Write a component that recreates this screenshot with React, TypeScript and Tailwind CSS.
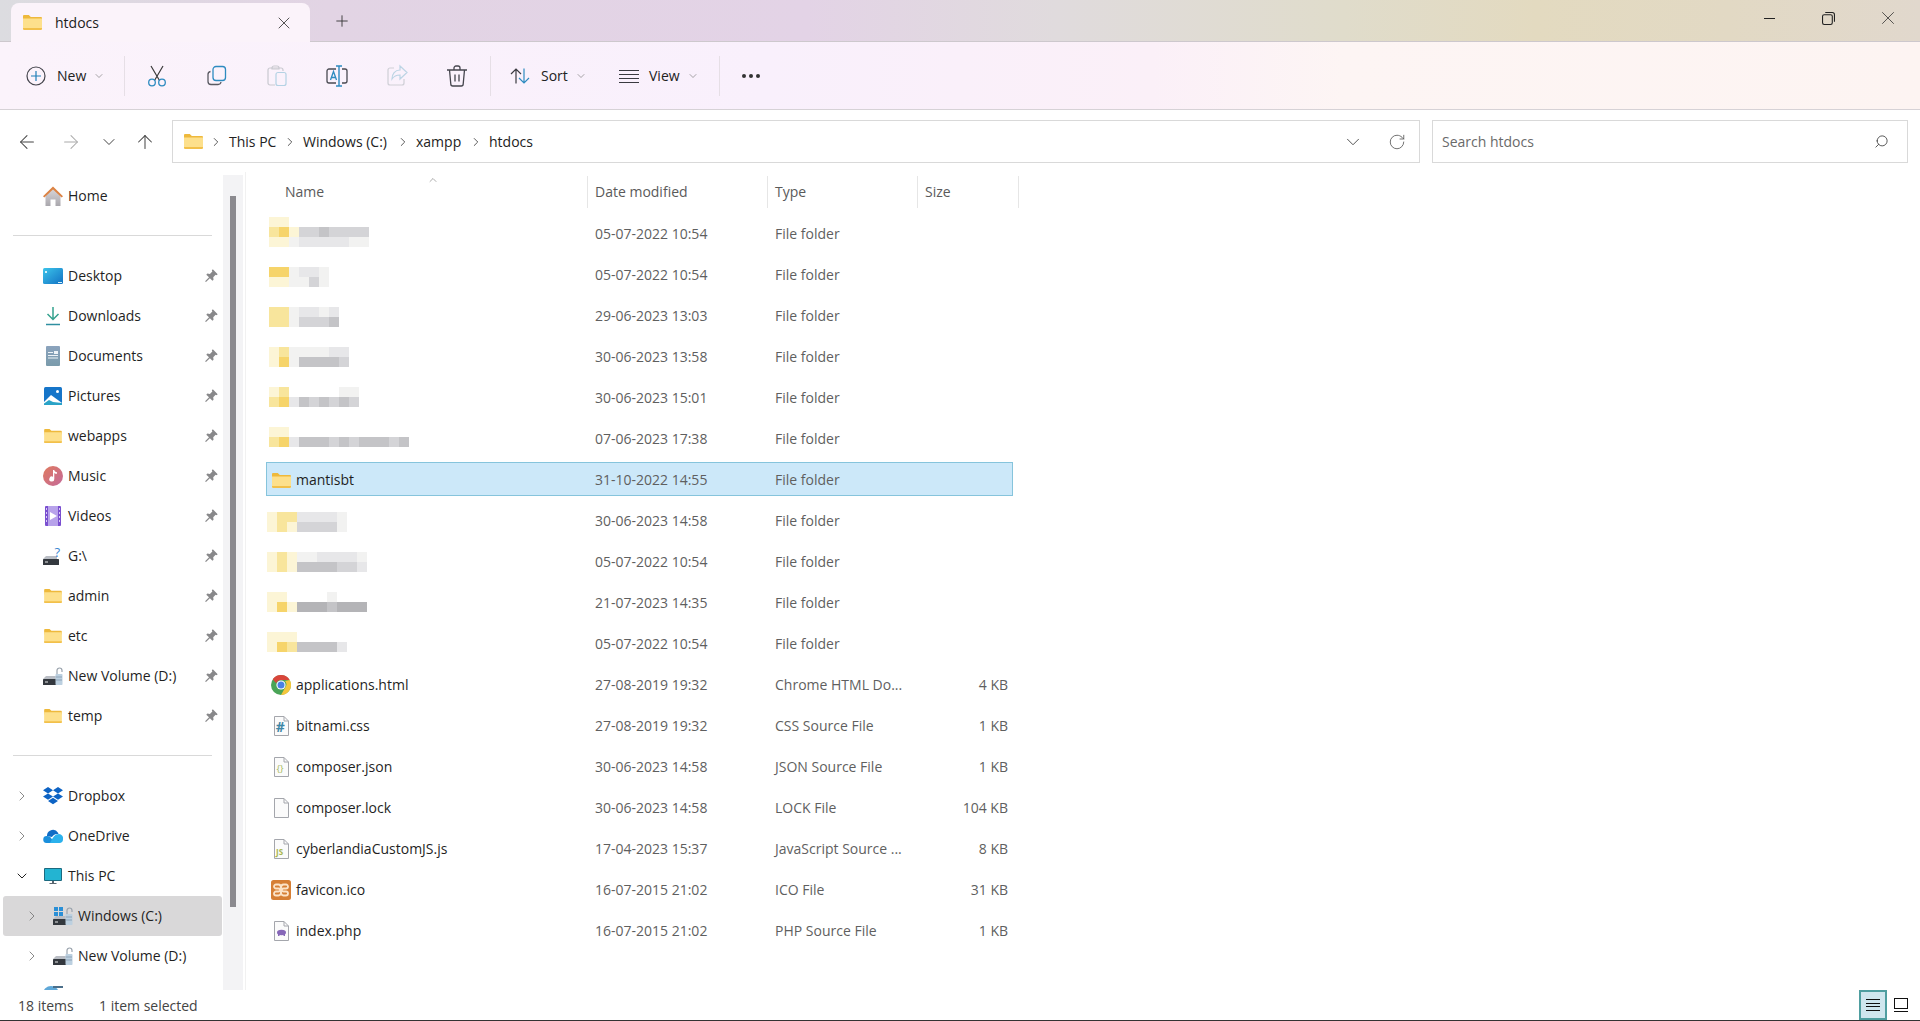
import { ArrowLeft, ArrowRight, ArrowUp, ChevronDown, ChevronRight, ChevronUp, Plus, RotateCw, Search, X } from "lucide-react";
import type { ReactNode } from "react";

function FolderIcon({ className = "w-[19px] h-[15px]" }: { className?: string }) {
    return (
        <svg viewBox="0 0 19 15" className={className}>
            <path d="M0 1.2C0 .5.5 0 1.2 0h4.6l2 2h10c.7 0 1.2.5 1.2 1.2V6H0z" fill="#eeb93c" />
            <path d="M0 3.4h19v10.4c0 .7-.5 1.2-1.2 1.2H1.2C.5 15 0 14.5 0 13.8z" fill="#fde08c" />
            <path d="M0 13h19v.8c0 .7-.5 1.2-1.2 1.2H1.2C.5 15 0 14.5 0 13.8z" fill="#f2c04a" />
        </svg>
    );
}

function PinIcon() {
    return (
        <svg viewBox="0 0 12 12" className="mb-[2px] w-[13px] h-[13px]" fill="#88888a">
            <path d="M7.2.3l4.5 4.5-1 .9-.9-.4-2.2 2.2.3 2.4-1 1-2.4-2.4-3.6 3.5-.8-.7 3.6-3.6L1.2 5.2l1-1 2.3.3 2.3-2.2-.5-1z" />
        </svg>
    );
}

function HomeIcon() {
    return (
        <svg viewBox="0 0 20 20" className="w-[20px] h-[20px]">
            <defs>
                <linearGradient id="homeBody" x1="0" y1="0" x2="0" y2="1">
                    <stop offset="0" stopColor="#d8d5d8" />
                    <stop offset="1" stopColor="#a9a7ad" />
                </linearGradient>
            </defs>
            <path d="M2.500 9l7.500-6 7.500 6v11H12.500v-6.500h-5V20h-5z" fill="url(#homeBody)" />
            <path d="M0 10.200L10 .5l10 9.700-1.300 1.400L10 3.600 1.300 11.600z" fill="#dc8344" />
        </svg>
    );
}

function DesktopIcon() {
    return (
        <svg viewBox="0 0 20 16" className="w-[20px] h-[16px]">
            <defs>
                <linearGradient id="desk" x1="0" y1="0" x2="1" y2="1">
                    <stop offset="0" stopColor="#3cc4ea" />
                    <stop offset="1" stopColor="#1272c4" />
                </linearGradient>
            </defs>
            <rect width="20" height="16" rx="1.500" fill="url(#desk)" />
            <rect x="2" y="3" width="2" height="2" fill="#d4f2fa" />
            <rect x="15" y="14" width="4" height="1" fill="#d4f2fa" />
        </svg>
    );
}

function DownloadIcon() {
    return (
        <svg viewBox="0 0 20 20" className="w-[20px] h-[20px]" fill="none" stroke="#35a28e" strokeWidth="1.500">
            <path d="M10 1v12M4.500 8l5.500 5.500L15.500 8" />
            <path d="M3 18.500h14" stroke="#2f8fa0" />
        </svg>
    );
}

function DocumentsIcon() {
    return (
        <svg viewBox="0 0 14 20" className="w-[14px] h-[20px]">
            <defs>
                <linearGradient id="doc" x1="0" y1="0" x2="0" y2="1">
                    <stop offset="0" stopColor="#8ba3bd" />
                    <stop offset="1" stopColor="#7a9bab" />
                </linearGradient>
            </defs>
            <rect width="14" height="20" rx="1" fill="url(#doc)" />
            <path d="M2 6h5v1H2zM8 5h4v3H8zM2 9h10v1H2zM2 11.500h10v1H2z" fill="#eef3f7" />
        </svg>
    );
}

function PicturesIcon() {
    return (
        <svg viewBox="0 0 18 18" className="w-[18px] h-[18px]">
            <rect width="18" height="18" rx="1.500" fill="#1675c9" />
            <circle cx="13.500" cy="4.500" r="1.500" fill="#fff" />
            <path d="M0 15l7-7 11 8v2H0z" fill="#fff" />
            <path d="M0 18v-1.500l5-3.500 4 2 9 1v2z" fill="#2aa3c7" />
        </svg>
    );
}

function MusicIcon() {
    return (
        <svg viewBox="0 0 20 20" className="w-[20px] h-[20px]">
            <defs>
                <linearGradient id="mus" x1="0" y1="0" x2="1" y2="1">
                    <stop offset="0" stopColor="#e07a5e" />
                    <stop offset="1" stopColor="#c46a9a" />
                </linearGradient>
            </defs>
            <circle cx="10" cy="10" r="10" fill="url(#mus)" />
            <path d="M10 4h1.300c.2 1.400 1.200 2 2.700 2.200v1.600c-1.100 0-2-.3-2.700-.9V13a2.500 2.500 0 1 1-1.300-2.200z" fill="#fff" />
        </svg>
    );
}

function VideosIcon() {
    return (
        <svg viewBox="0 0 16 20" className="w-[16px] h-[20px]">
            <rect width="16" height="20" rx="1" fill="#7a4fd0" />
            <rect x="3" width="10" height="20" fill="#b7a2ea" />
            <path d="M5 6l7 4-7 4z" fill="#fff" />
            <path d="M1 2h1v2H1zM1 6h1v2H1zM1 10h1v2H1zM1 14h1v2H1zM14 2h1v2h-1zM14 6h1v2h-1zM14 10h1v2h-1zM14 14h1v2h-1z" fill="#d8ccf5" />
        </svg>
    );
}

function DriveIcon({ mark }: { mark: "question" | "lock" | "windows" }) {
    return (
        <svg viewBox="0 0 20 20" className="w-[20px] h-[20px]">
            <path d="M0 13l3-3h11v3z" fill="#b9bdc4" />
            <rect y="13" width="16" height="6" rx=".6" fill="#33383e" />
            <rect x="2" y="15.500" width="3" height="1" fill="#e8e8e8" />
            {mark === "question" && <text x="11.500" y="11" fontSize="13" fill="#3a86d0" fontFamily="Open Sans">?</text>}
            {mark === "lock" && (
                <g>
                    <path d="M14 8V4.500a2.500 2.500 0 0 1 5 0V6" fill="none" stroke="#9aa3ad" strokeWidth="1.200" />
                    <rect x="12.500" y="8" width="7" height="11" rx=".8" fill="#bcd0e0" />
                    <path d="M13 11h6M13 14h6" stroke="#8ea4b8" />
                </g>
            )}
            {mark === "windows" && (
                <g>
                    <path d="M1 1h4v4H1zM6 1h4v4H6zM1 6h4v4H1zM6 6h4v4H6z" fill="#2a8fd6" />
                    <path d="M14 8V4.500a2.500 2.500 0 0 1 5 0V6" fill="none" stroke="#9aa3ad" strokeWidth="1.200" />
                    <rect x="12.500" y="8" width="7" height="11" rx=".8" fill="#bcd0e0" />
                    <path d="M13 11h6M13 14h6" stroke="#8ea4b8" />
                </g>
            )}
        </svg>
    );
}

function DropboxIcon() {
    return (
        <svg viewBox="0 0 20 19" className="w-[20px] h-[19px]" fill="#0d63c4">
            <path d="M5 0l5 3.200-5 3.200L0 3.200zM15 0l5 3.200-5 3.200-5-3.200zM0 9.600l5-3.200 5 3.200-5 3.200zM15 6.400l5 3.200-5 3.200-5-3.200zM5 14l5-3.200 5 3.200-5 3.200z" />
        </svg>
    );
}

function OneDriveIcon() {
    return (
        <svg viewBox="0 0 20 14" className="w-[20px] h-[14px]">
            <path d="M4 6a6 6 0 0 1 11-2.300A4.500 4.500 0 0 1 15.500 5C12 4.500 10 6 9 8L4 7z" fill="#0f6cc6" />
            <path d="M3.500 14A3.500 3.500 0 0 1 4 7a5.500 5.500 0 0 1 3 .8L12 14z" fill="#1a8fdc" />
            <path d="M7 14c3-6 5-9 9-9a4.500 4.500 0 0 1 4 5.500c0 2-1.500 3.500-3.500 3.500z" fill="#2bb1ec" />
        </svg>
    );
}

function PcIcon() {
    return (
        <svg viewBox="0 0 18 17" className="w-[18px] h-[17px]">
            <rect width="18" height="13" rx="1" fill="#1b6a80" />
            <rect x="1" y="1" width="16" height="11" fill="#23b4d2" />
            <path d="M8 13h2v2H8zM5.500 15h7v1h-7z" fill="#5a6670" />
        </svg>
    );
}

function NetworkIcon() {
    return (
        <svg viewBox="0 0 20 22" className="w-[20px] h-[22px]">
            <circle cx="8" cy="9" r="8" fill="#5fa8d8" />
            <rect x="10" y="1" width="10" height="2" fill="#4b6f8a" />
            <rect x="10" y="8" width="10" height="8" fill="#8fb4cc" />
        </svg>
    );
}

function ChromeIcon() {
    return (
        <svg viewBox="0 0 20 20" className="w-[20px] h-[20px]">
            <circle cx="10" cy="10" r="10" fill="#4aa457" />
            <path d="M10 0a10 10 0 0 1 8.700 5H10a5 5 0 0 0-4.700 3.300L1.700 4.300A10 10 0 0 1 10 0z" fill="#d9453a" />
            <path d="M18.700 5A10 10 0 0 1 10 20l4.200-7.500A5 5 0 0 0 14 6z" fill="#f4c63d" />
            <circle cx="10" cy="10" r="4.600" fill="#fff" />
            <circle cx="10" cy="10" r="3.500" fill="#4a80e4" />
        </svg>
    );
}

function PageIcon({ children }: { children?: ReactNode }) {
    return (
        <svg viewBox="0 0 15 20" className="w-[15px] h-[20px]">
            <path d="M.5.500h9.500l4.500 4.500v14.500H.5z" fill="#fbfbfb" stroke="#a4a6ac" />
            <path d="M10 .5v4.500h4.500" fill="none" stroke="#a4a6ac" />
            {children}
        </svg>
    );
}

function XamppIcon() {
    return (
        <svg viewBox="0 0 20 20" className="w-[20px] h-[20px]">
            <rect width="20" height="20" rx="2.500" fill="#d67f35" />
            <path d="M5 4.500h2.500c2 0 2.500 2 2.500 3.500s.5 3.500 2.500 3.500H15a2 2 0 0 1 0 4h-2.500c-2 0-2.500-2-2.500-3.500s-.5-3.500-2.500-3.500H5a2 2 0 0 1 0-4z" fill="none" stroke="#fbe3c8" strokeWidth="1.800" />
            <path d="M15 4.500h-2.500c-2 0-2.500 2-2.500 3.500s-.5 3.500-2.500 3.500H5a2 2 0 0 0 0 4h2.500c2 0 2.500-2 2.500-3.500s.5-3.500 2.500-3.500H15a2 2 0 0 0 0-4z" fill="none" stroke="#fbe3c8" strokeWidth="1.800" />
        </svg>
    );
}

function CutIcon() {
    return (
        <svg viewBox="0 0 24 24" className="w-[24px] h-[24px]" fill="none" strokeWidth="1.200">
            <path d="M6 2l8.500 14.500M18 2L9.500 16.500" stroke="#3a3a3a" />
            <circle cx="7" cy="18.500" r="3.300" stroke="#2d8bc0" strokeWidth="1.300" />
            <circle cx="17" cy="18.500" r="3.300" stroke="#2d8bc0" strokeWidth="1.300" />
        </svg>
    );
}

function CopyIcon() {
    return (
        <svg viewBox="0 0 24 24" className="w-[24px] h-[24px]" fill="none" strokeWidth="1.300">
            <path d="M5.500 7.500A3 3 0 0 0 3 10.500v7A3 3 0 0 0 6 20.500h7a3 3 0 0 0 3-2.500" stroke="#5a5a62" />
            <rect x="8" y="2.500" width="12.500" height="14" rx="3" stroke="#2d8bc0" />
        </svg>
    );
}

function PasteIcon() {
    return (
        <svg viewBox="0 0 24 24" className="w-[24px] h-[24px]" fill="none" strokeWidth="1.200">
            <path d="M10 21H5a2 2 0 0 1-2-2V6a2 2 0 0 1 2-2h11a2 2 0 0 1 2 2v1" stroke="#c9c9d0" />
            <path d="M7 4a2 2 0 0 1 2-2h3a2 2 0 0 1 2 2v1H7z" stroke="#c9c9d0" />
            <rect x="11" y="8.500" width="10" height="13" rx="2" stroke="#b4d2e4" />
        </svg>
    );
}

function RenameIcon() {
    return (
        <svg viewBox="0 0 24 24" className="w-[24px] h-[24px]" fill="none" strokeWidth="1.300">
            <path d="M11 5H4a2 2 0 0 0-2 2v10a2 2 0 0 0 2 2h7M17 5h3a2 2 0 0 1 2 2v10a2 2 0 0 1-2 2h-3" stroke="#4a4a52" />
            <path d="M14 2v20M11 2h6M11 22h6" stroke="#2d8bc0" strokeWidth="1.400" />
            <path d="M5.500 16l3-8.500 3 8.500M6.500 13.500h4" stroke="#2d8bc0" />
        </svg>
    );
}

function ShareIcon() {
    return (
        <svg viewBox="0 0 24 24" className="w-[24px] h-[24px]" fill="none" strokeWidth="1.200">
            <path d="M9 4H5a2 2 0 0 0-2 2v13a2 2 0 0 0 2 2h12a2 2 0 0 0 2-2v-4" stroke="#cfcfd6" />
            <path d="M15 2l7 6.500-7 6.500v-4c-4 0-6 1-8 4 0-5 3-9 8-9z" stroke="#bcd4e4" />
        </svg>
    );
}

function TrashIcon() {
    return (
        <svg viewBox="0 0 24 24" className="w-[24px] h-[24px]" fill="none" stroke="#45454d" strokeWidth="1.300">
            <path d="M2 6h20M9 5.500V4a2 2 0 0 1 2-2h2a2 2 0 0 1 2 2v1.500" />
            <path d="M4.500 6l1.300 14a2 2 0 0 0 2 2h8.400a2 2 0 0 0 2-2L19.500 6" />
            <path d="M10 10.500v7M14 10.500v7" />
        </svg>
    );
}

function SortIcon() {
    return (
        <svg viewBox="0 0 20 16" className="w-[20px] h-[16px]" fill="none" strokeWidth="1.200">
            <path d="M6 15.500V1M1 6l5-5 5 5" stroke="#3a3a40" />
            <path d="M14 .5V15M9 10l5 5 5-5" stroke="#2d8bc0" />
        </svg>
    );
}

function ViewIcon() {
    return (
        <svg viewBox="0 0 20 14" className="w-[20px] h-[14px]" fill="none" stroke="#3a3a40" strokeWidth="1">
            <path d="M0 1.500h20M0 5.500h20M0 9.500h20M0 13.500h20" />
        </svg>
    );
}

function NewIcon() {
    return (
        <svg viewBox="0 0 20 20" className="w-[20px] h-[20px]" fill="none" strokeWidth="1.200">
            <circle cx="10" cy="10" r="9" stroke="#45454d" />
            <path d="M10 5v10M5 10h10" stroke="#1f7fb8" />
        </svg>
    );
}

function Caret() {
    return <ChevronDown className="w-[12px] h-[12px] text-[#777]" strokeWidth={1.300} />;
}

function Divider() {
    return <div className="w-px h-[40px] bg-[#e6dfe6]" />;
}

function ToolBtn({ children }: { children: ReactNode }) {
    return <div className="flex w-[60px] h-[40px] items-center justify-center">{children}</div>;
}

function Titlebar() {
    return (
        <div className="flex h-[42px] flex-none border-b border-[#cdc8cd] bg-[linear-gradient(90deg,#dcdce0_0%,#dfd6e2_10%,#e2d4e4_17%,#e3d3e6_42%,#e0dbdd_55%,#e0dccb_70%,#e3dac0_80%,#e2d9c4_90%,#e1d8cd_100%)]">
            <div className="ml-[11px] mt-[3px] flex h-[39px] w-[299px] items-center rounded-t-[8px] bg-[#fbf3fa] pl-[12px]">
                <FolderIcon />
                <span className="ml-[13px] text-[#1c1c1c]">htdocs</span>
                <X className="ml-auto mr-[16px] w-[20px] h-[20px] text-[#333]" strokeWidth={1} />
            </div>
            <div className="flex w-[64px] items-center justify-center">
                <Plus className="w-[18px] h-[18px] text-[#333]" strokeWidth={1.200} />
            </div>
            <div className="ml-auto flex h-[36px] items-center pr-[3px]">
                <div className="flex w-[59px] justify-center">
                    <div className="h-px w-[11px] bg-[#222]" />
                </div>
                <div className="flex w-[59px] justify-center">
                    <svg viewBox="0 0 12 12" className="w-[13px] h-[13px]" fill="none" stroke="#222">
                        <rect x=".5" y="2.500" width="9" height="9" rx="1.500" />
                        <path d="M3 .5h6.500a2 2 0 0 1 2 2V9" />
                    </svg>
                </div>
                <div className="flex w-[59px] justify-center">
                    <X className="w-[22px] h-[22px] text-[#222]" strokeWidth={0.800} />
                </div>
            </div>
        </div>
    );
}

function Toolbar() {
    return (
        <div className="flex h-[68px] flex-none items-center border-b border-[#d6d2d6] bg-[linear-gradient(90deg,#fbf3fb_0%,#f9f0fc_40%,#fbf0f8_60%,#fdf5f4_70%,#fdf4f2_100%)] text-[#222]">
            <div className="flex w-[124px] items-center pl-[26px]">
                <NewIcon />
                <span className="ml-[11px] w-[36px]">New</span>
                <Caret />
            </div>
            <Divider />
            <div className="ml-[2px] flex">
                <ToolBtn><CutIcon /></ToolBtn>
                <ToolBtn><CopyIcon /></ToolBtn>
                <ToolBtn><PasteIcon /></ToolBtn>
                <ToolBtn><RenameIcon /></ToolBtn>
                <ToolBtn><ShareIcon /></ToolBtn>
                <ToolBtn><TrashIcon /></ToolBtn>
            </div>
            <div className="ml-[3px]"><Divider /></div>
            <div className="flex w-[118px] items-center pl-[19px]">
                <SortIcon />
                <span className="ml-[11px] w-[34px]">Sort</span>
                <Caret />
            </div>
            <div className="flex w-[110px] items-center pl-[10px]">
                <ViewIcon />
                <span className="ml-[10px] w-[38px]">View</span>
                <Caret />
            </div>
            <Divider />
            <div className="ml-[22px] flex gap-[3px]">
                <div className="h-[4px] w-[4px] rounded-full bg-[#333]" />
                <div className="h-[4px] w-[4px] rounded-full bg-[#333]" />
                <div className="h-[4px] w-[4px] rounded-full bg-[#333]" />
            </div>
        </div>
    );
}

function Crumb({ label, width }: { label: string; width: string }) {
    return (
        <div className={`flex items-center ${width}`}>
            <ChevronRight className="w-[14px] h-[14px] text-[#444]" strokeWidth={1.500} />
            <span className="ml-[6px]">{label}</span>
        </div>
    );
}

function NavBar() {
    return (
        <div className="flex h-[62px] flex-none items-start pt-[10px] text-[#222]">
            <div className="flex h-[43px] w-[172px] items-center pl-[5px]">
                <div className="flex w-[44px] justify-center"><ArrowLeft className="w-[22px] h-[22px] text-[#444]" strokeWidth={1.100} /></div>
                <div className="flex w-[44px] justify-center"><ArrowRight className="w-[22px] h-[22px] text-[#aaa]" strokeWidth={1.100} /></div>
                <div className="flex w-[32px] justify-center"><ChevronDown className="w-[20px] h-[20px] text-[#444]" strokeWidth={1.200} /></div>
                <div className="flex w-[40px] justify-center"><ArrowUp className="w-[22px] h-[22px] text-[#444]" strokeWidth={1.100} /></div>
            </div>
            <div className="flex h-[43px] w-[1248px] items-center border border-[#d9d9d9] pl-[11px]">
                <FolderIcon className="w-[19px] h-[15px]" />
                <div className="ml-[6px] flex items-center">
                    <Crumb label="This PC" width="w-[74px]" />
                    <Crumb label="Windows (C:)" width="w-[113px]" />
                    <Crumb label="xampp" width="w-[73px]" />
                    <Crumb label="htdocs" width="w-[80px]" />
                </div>
                <ChevronDown className="ml-auto w-[22px] h-[22px] text-[#444]" strokeWidth={1} />
                <RotateCw className="ml-[24px] mr-[13px] w-[18px] h-[18px] text-[#555]" strokeWidth={1.100} />
            </div>
            <div className="ml-[12px] flex h-[43px] w-[476px] items-center border border-[#d9d9d9] pl-[9px] pr-[18px] text-[#6a6a6a]">
                <span>Search htdocs</span>
                <Search className="ml-auto w-[15px] h-[15px] -scale-x-100 text-[#444]" strokeWidth={1.400} />
            </div>
        </div>
    );
}

type NavRow = { icon: ReactNode; label: string; pin?: boolean; chev?: "right" | "down"; level?: number; selected?: boolean };

const quick: NavRow[] = [
    { icon: <DesktopIcon />, label: "Desktop", pin: true },
    { icon: <DownloadIcon />, label: "Downloads", pin: true },
    { icon: <DocumentsIcon />, label: "Documents", pin: true },
    { icon: <PicturesIcon />, label: "Pictures", pin: true },
    { icon: <FolderIcon className="w-[18px] h-[14px]" />, label: "webapps", pin: true },
    { icon: <MusicIcon />, label: "Music", pin: true },
    { icon: <VideosIcon />, label: "Videos", pin: true },
    { icon: <DriveIcon mark="question" />, label: "G:\\", pin: true },
    { icon: <FolderIcon className="w-[18px] h-[14px]" />, label: "admin", pin: true },
    { icon: <FolderIcon className="w-[18px] h-[14px]" />, label: "etc", pin: true },
    { icon: <DriveIcon mark="lock" />, label: "New Volume (D:)", pin: true },
    { icon: <FolderIcon className="w-[18px] h-[14px]" />, label: "temp", pin: true },
];

const places: NavRow[] = [
    { icon: <DropboxIcon />, label: "Dropbox", chev: "right" },
    { icon: <OneDriveIcon />, label: "OneDrive", chev: "right" },
    { icon: <PcIcon />, label: "This PC", chev: "down" },
    { icon: <DriveIcon mark="windows" />, label: "Windows (C:)", chev: "right", level: 1, selected: true },
    { icon: <DriveIcon mark="lock" />, label: "New Volume (D:)", chev: "right", level: 1 },
    { icon: <NetworkIcon />, label: "Network", chev: "right" },
];

function SideRow({ row }: { row: NavRow }) {
    return (
        <div className={`ml-[3px] flex h-[40px] w-[219px] flex-none items-center rounded-[3px] ${row.selected ? "bg-[#d9d8d9]" : ""}`}>
            <div className={`flex w-[16px] flex-none justify-center ${row.level ? "ml-[21px]" : "ml-[11px]"}`}>
                {row.chev === "right" && <ChevronRight className="w-[16px] h-[16px] text-[#777]" strokeWidth={1.300} />}
                {row.chev === "down" && <ChevronDown className="w-[16px] h-[16px] text-[#222]" strokeWidth={1.500} />}
            </div>
            <div className="ml-[13px] flex w-[20px] flex-none justify-center">{row.icon}</div>
            <span className="ml-[5px] text-[#1f1f1f]">{row.label}</span>
            {row.pin && <div className="ml-auto mr-[4px] flex"><PinIcon /></div>}
        </div>
    );
}

function SideSep() {
    return (
        <div className="flex h-[40px] flex-none items-start pt-[19px]">
            <div className="ml-[13px] h-px w-[199px] bg-[#d9d9d9]" />
        </div>
    );
}

function Sidebar() {
    return (
        <div className="flex w-[246px] flex-none border-r border-[#f1f1f1] overflow-hidden">
            <div className="flex w-[223px] flex-none flex-col overflow-hidden pt-[4px]">
                <SideRow row={{ icon: <HomeIcon />, label: "Home" }} />
                <SideSep />
                {quick.map((r) => <SideRow key={r.label + "q"} row={r} />)}
                <SideSep />
                {places.map((r) => <SideRow key={r.label + "p"} row={r} />)}
            </div>
            <div className="mt-[3px] w-[20px] flex-none bg-[#f3f3f5] pl-[7px] pt-[21px]">
                <div className="h-[711px] w-[6px] bg-[#8b8a8f]" />
            </div>
        </div>
    );
}

const cellColor: Record<string, string> = {
    ".": "bg-transparent",
    a: "bg-[#f6d46a]",
    b: "bg-[#f8e59c]",
    c: "bg-[#fcf5d6]",
    d: "bg-[#f2f2f1]",
    e: "bg-[#e7e7e9]",
    f: "bg-[#d4d4d7]",
    g: "bg-[#c4c4c7]",
    h: "bg-[#b4b4b7]",
};

type Blurred = { ml: string; mt: string; lines: string[] };

function Mosaic({ data }: { data: Blurred }) {
    return (
        <div className={`flex flex-col blur-[0.6px] ${data.ml} ${data.mt}`}>
            {data.lines.map((line, i) => (
                <div key={i} className="flex h-[10px]">
                    {line.split("").map((c, j) => <div key={j} className={`h-[10px] w-[10px] ${cellColor[c]}`} />)}
                </div>
            ))}
        </div>
    );
}

type FileRow = { date: string; type: string; size?: string; name?: string; icon?: ReactNode; blur?: Blurred; selected?: boolean };

const files: FileRow[] = [
    { date: "05-07-2022 10:54", type: "File folder", blur: { ml: "ml-[3px]", mt: "mt-0", lines: ["cc........", "bacffgffff", "ccdeeeeedd"] } },
    { date: "05-07-2022 10:54", type: "File folder", blur: { ml: "ml-[3px]", mt: "-mt-[1px]", lines: ["......", "aadeed", "ccddfd"] } },
    { date: "29-06-2023 13:03", type: "File folder", blur: { ml: "ml-[3px]", mt: "-mt-[2px]", lines: ["......", "bbdeede", "bbdfffg"] } },
    { date: "30-06-2023 13:58", type: "File folder", blur: { ml: "ml-[3px]", mt: "-mt-[3px]", lines: ["........", "cbddddee", "cadggggf"] } },
    { date: "30-06-2023 15:01", type: "File folder", blur: { ml: "ml-[3px]", mt: "-mt-[4px]", lines: ["........", "cb.....dd", "baegfgfgf"] } },
    { date: "07-06-2023 17:38", type: "File folder", blur: { ml: "ml-[3px]", mt: "-mt-[5px]", lines: ["..............", "cc............", "baegggfgfgggfg"] } },
    { date: "31-10-2022 14:55", type: "File folder", name: "mantisbt", icon: <FolderIcon />, selected: true },
    { date: "30-06-2023 14:58", type: "File folder", blur: { ml: "ml-[1px]", mt: "-mt-[2px]", lines: ["........", "cbbeeeed", "cbcffffd"] } },
    { date: "05-07-2022 10:54", type: "File folder", blur: { ml: "ml-[1px]", mt: "-mt-[3px]", lines: ["..........", "cbcddeeeed", "cbcggggffe"] } },
    { date: "21-07-2023 14:35", type: "File folder", blur: { ml: "ml-[1px]", mt: "-mt-[4px]", lines: ["..........", "cc....d...", "cachhhghhh"] } },
    { date: "05-07-2022 10:54", type: "File folder", blur: { ml: "ml-[1px]", mt: "-mt-[5px]", lines: ["........", "ccc.....", "cabgggge"] } },
    { date: "27-08-2019 19:32", type: "Chrome HTML Do...", size: "4 KB", name: "applications.html", icon: <ChromeIcon /> },
    { date: "27-08-2019 19:32", type: "CSS Source File", size: "1 KB", name: "bitnami.css", icon: <PageIcon><text x="1.800" y="16" fontSize="14" fontWeight="700" fill="#3f87a6" fontFamily="Open Sans">#</text></PageIcon> },
    { date: "30-06-2023 14:58", type: "JSON Source File", size: "1 KB", name: "composer.json", icon: <PageIcon><text x="2.500" y="15" fontSize="9.500" fill="#a4b95a" fontFamily="Open Sans">{"{}"}</text></PageIcon> },
    { date: "30-06-2023 14:58", type: "LOCK File", size: "104 KB", name: "composer.lock", icon: <PageIcon /> },
    { date: "17-04-2023 15:37", type: "JavaScript Source ...", size: "8 KB", name: "cyberlandiaCustomJS.js", icon: <PageIcon><text x="2" y="15.500" fontSize="8" fontWeight="700" fill="#a8b64e" fontFamily="Open Sans">JS</text></PageIcon> },
    { date: "16-07-2015 21:02", type: "ICO File", size: "31 KB", name: "favicon.ico", icon: <XamppIcon /> },
    { date: "16-07-2015 21:02", type: "PHP Source File", size: "1 KB", name: "index.php", icon: <PageIcon><ellipse cx="7.500" cy="11.500" rx="4.500" ry="2.800" fill="#8667b8" /><path d="M4 13h1.500v2H4zM9.500 13H11v2H9.500z" fill="#8667b8" /></PageIcon> },
];

function FileList() {
    return (
        <div className="flex min-w-0 flex-1 flex-col">
            <div className="relative flex h-[40px] flex-none items-start pt-[4px] text-[#5a5a5a]">
                <ChevronUp className="absolute left-[181px] top-[2px] w-[12px] h-[12px] text-[#666]" strokeWidth={1.100} />
                <div className="flex h-[32px] w-[342px] items-center border-r border-[#e6e6e6] pl-[39px]">Name</div>
                <div className="flex h-[32px] w-[180px] items-center border-r border-[#e6e6e6] pl-[7px]">Date modified</div>
                <div className="flex h-[32px] w-[150px] items-center border-r border-[#e6e6e6] pl-[7px]">Type</div>
                <div className="flex h-[32px] w-[101px] items-center border-r border-[#e6e6e6] pl-[7px]">Size</div>
            </div>
            <div className="ml-[20px] mt-[5px] flex w-[747px] flex-col gap-[7px]">
                {files.map((f, i) => (
                    <div key={i} className={`flex h-[34px] flex-none items-center ${f.selected ? "-mt-[1px] mb-[1px] pt-[2px] bg-[#cce8f9] outline outline-1 -outline-offset-1 outline-[#86c4dc]" : ""}`}>
                        <div className="flex h-full w-[321px] flex-none items-center">
                            {f.blur ? (
                                <div className="self-start"><Mosaic data={f.blur} /></div>
                            ) : (
                                <>
                                    <div className="ml-[5px] flex w-[20px] justify-center">{f.icon}</div>
                                    <span className="ml-[5px] text-[#1f1f1f]">{f.name}</span>
                                </>
                            )}
                        </div>
                        <div className="w-[180px] flex-none pl-[8px] text-[#5f5f5f]">{f.date}</div>
                        <div className="w-[151px] flex-none pl-[8px] text-[#5f5f5f]">{f.type}</div>
                        <div className="w-[95px] flex-none pr-[5px] text-right text-[#5f5f5f]">{f.size}</div>
                    </div>
                ))}
            </div>
        </div>
    );
}

function StatusBar() {
    return (
        <div className="flex h-[31px] flex-none items-center border-b border-[#333] text-[#444]">
            <span className="ml-[18px] mt-[2px] w-[81px]">18 items</span>
            <span className="mt-[2px]">1 item selected</span>
            <div className="ml-auto flex h-[30px] items-center pr-[12px]">
                <div className="flex h-[30px] w-[28px] items-center justify-center border-2 border-[#4f9ea0] bg-[#cfe6ee]">
                    <svg viewBox="0 0 14 12" className="w-[14px] h-[12px]" fill="none" stroke="#111" strokeWidth="1">
                        <path d="M0 .5h14M0 4.500h14M0 7.500h14M0 11.500h14" />
                    </svg>
                </div>
                <div className="ml-[7px] flex w-[14px] items-center">
                    <svg viewBox="0 0 14 14" className="w-[14px] h-[14px]" fill="none" stroke="#111" strokeWidth="1">
                        <rect x=".5" y=".5" width="13" height="10" />
                        <path d="M0 13.500h14" />
                    </svg>
                </div>
            </div>
        </div>
    );
}

export default function App() {
    return (
        <div className="flex h-screen w-full flex-col overflow-hidden bg-white font-['Open_Sans',sans-serif] text-[14px] leading-none">
            <Titlebar />
            <Toolbar />
            <NavBar />
            <div className="flex min-h-0 flex-1 overflow-hidden">
                <Sidebar />
                <FileList />
            </div>
            <StatusBar />
        </div>
    );
}
